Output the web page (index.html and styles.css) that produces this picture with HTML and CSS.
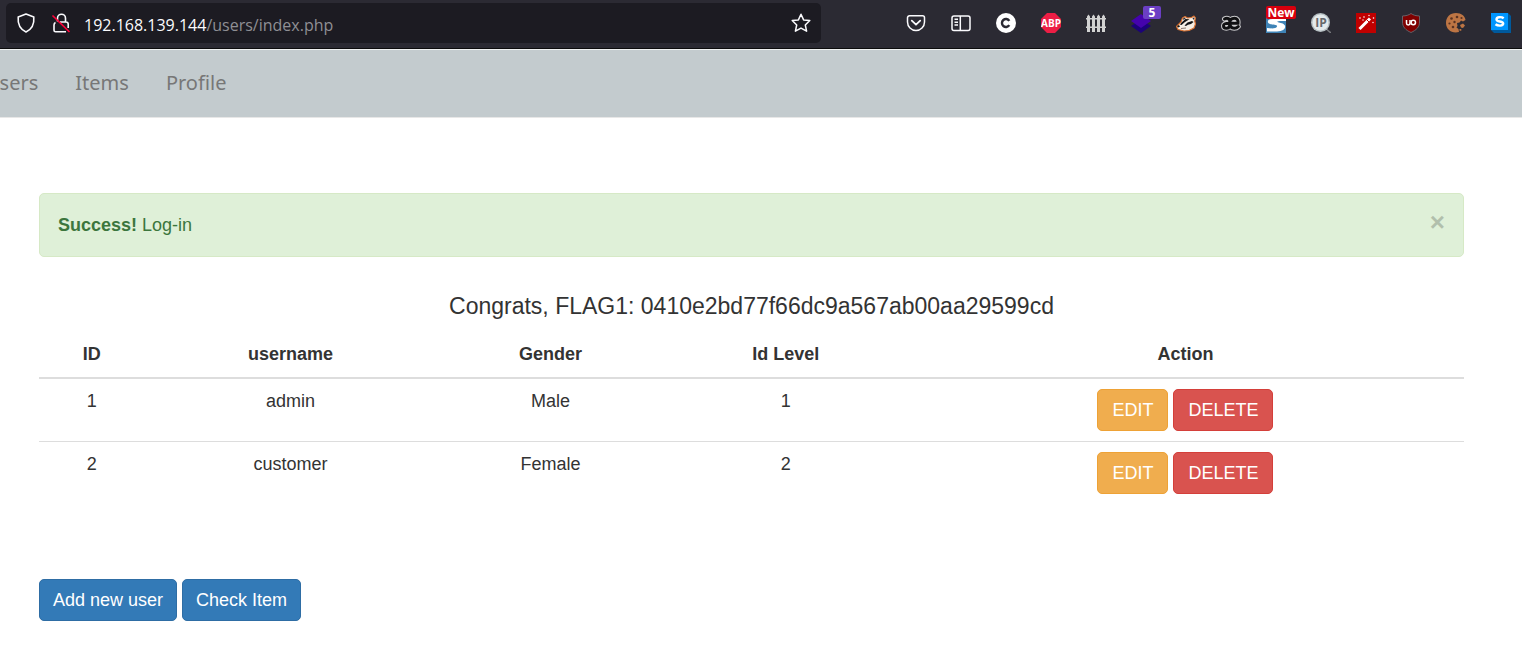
FILE: index.html
```html
<!DOCTYPE html>
<html lang="en">
<head>
<meta charset="utf-8">
<title>Users</title>
<link rel="stylesheet" href="styles.css">
</head>
<body>
<header class="toolbar">
  <div class="urlbar">
    <button class="icon-btn" aria-label="Tracking protection"><svg viewBox="0 0 20 20"><path d="M10 1 L17.800 3.900 C18.300 9.500 16.500 16 10 19 C3.500 16 1.700 9.500 2.200 3.900 Z" fill="none" stroke="#fbfbfe" stroke-width="1.600" stroke-linejoin="round"/></svg></button>
    <button class="icon-btn" aria-label="Connection not secure"><svg viewBox="0 0 20 20" fill="none"><path d="M6.500 8.500V5.200a4 4 0 0 1 8 0V9M4.500 9.500C3.300 10 3 11 3 12v5.200a1.600 1.600 0 0 0 1.600 1.600H15M9 9h6.200a2 2 0 0 1 2 2v4" stroke="#fbfbfe" stroke-width="1.600"/><path d="M1.500 2.500L18.500 19" stroke="#ff0039" stroke-width="1.700"/></svg></button>
    <div class="address" role="textbox" aria-label="Address" contenteditable="true" spellcheck="false"><span class="host">192.168.139.144</span>/users/index.php</div>
    <button class="icon-btn" aria-label="Bookmark this page"><svg viewBox="0 0 20 20"><path d="M10 1.300 L12.600 6.900 L18.800 7.500 L14.300 12 L15.600 18.200 L10 15.100 L4.400 18.200 L5.700 12 L1.200 7.500 L7.400 6.900 Z" fill="none" stroke="#fbfbfe" stroke-width="1.500" stroke-linejoin="round"/></svg></button>
  </div>
  <div class="extensions">
    <button class="icon-btn" aria-label="Pocket"><svg viewBox="0 0 20 20" fill="none" stroke="#fbfbfe" stroke-width="1.500" stroke-linecap="round" stroke-linejoin="round"><path d="M3.500 2.800h13a2 2 0 0 1 2 2V9a8.500 8.500 0 0 1-17 0V4.800a2 2 0 0 1 2-2z"/><path d="M5.800 7.700L10 11.700L14.200 7.700" stroke-width="1.800"/></svg></button>
    <button class="icon-btn" aria-label="Sidebar"><svg viewBox="0 0 20 20" fill="none" stroke="#fbfbfe" stroke-width="1.500"><rect x="1" y="3" width="18" height="14.500" rx="2"/><path d="M9.300 3v14.500M3.500 6.300h3.500M3.500 9.200h3.500M3.500 12h3.500"/></svg></button>
    <button class="icon-btn" aria-label="Extension C"><svg viewBox="0 0 20 20"><circle cx="10" cy="10" r="10" fill="#fff"/><path d="M13.300 7.800a4 4 0 1 0 0 4.400" fill="none" stroke="#2b2a33" stroke-width="2.400"/></svg></button>
    <button class="icon-btn" aria-label="Adblock Plus"><svg viewBox="0 0 20 20"><path d="M6 0h8l6 6v8l-6 6H6l-6-6V6z" fill="#ed1e45"/><text class="abp-label" x="10" y="14" text-anchor="middle">ABP</text></svg></button>
    <button class="icon-btn" aria-label="Fence"><svg viewBox="0 0 20 20" fill="#d2d2d2"><path d="M1 3.500l1.500-2 1.500 2V19H1zM6 3.500l1.500-2 1.500 2V19H6zM11 3.500l1.500-2 1.500 2V19h-3zM16 3.500l1.500-2 1.500 2V19h-3z"/><path d="M0 5h20v1.500H0zM0 13.500h20V15H0z"/></svg></button>
    <button class="icon-btn" aria-label="Layers, 5"><svg viewBox="0 0 20 20"><path d="M0 13L10 6l10 7-10 7z" fill="#1c0279"/><path d="M0 8L10 1l10 7-10 7z" fill="#4503ad"/></svg><span class="badge badge-count">5</span></button>
    <button class="icon-btn" aria-label="Privacy Badger"><svg viewBox="0 0 20 20"><path d="M.5 13.500L5 9 6.500 5 9 3.500l2.500 1.500 4-.5L18 3l1.500 2-.8 3 .8 3-1.500 4-5 2.500-5 .5-6-1.500z" fill="#f6efe4" stroke="#d9702f" stroke-width="1.200" stroke-linejoin="round"/><path d="M5.500 9.500L9.500 6l4 .3L9 9l-3.500 3-1.500-.3z" fill="#141414"/><path d="M8.500 12.500l3-3 4.500-1.500 1.500 1-2.500 2-3 .7-2 1.300z" fill="#141414"/><path d="M1 13l2-1 1 1.800-2 .7z" fill="#141414"/><path d="M7 5.500l1.800-1 1 .8-2.300 1.700zM16.500 5.500L18 4.300l.5 1.500-1 1z" fill="#2b2a33"/><path d="M5 15.500l5-.5" stroke="#8f7c70"/></svg></button>
    <button class="icon-btn" aria-label="Extension AE"><svg viewBox="0 0 20 20" fill="none" stroke-linecap="round"><path stroke="#c9c9cb" stroke-width="5" d="M3.500 6C5.500 4.800 8.800 5 8.800 8v4c0 2-1.500 3.200-3.500 3.200S2.500 14.300 2.500 12.800 4 10.300 8.500 10.300h8.500C17.500 7 16 5.300 13.500 5.300 10.500 5.300 8.800 7 8.800 10c0 4 2 5.200 4.500 5.200 2 0 3-.6 4-1.700"/><path stroke="#101012" stroke-width="3" d="M3.500 6C5.500 4.800 8.800 5 8.800 8v4c0 2-1.500 3.200-3.500 3.200S2.500 14.300 2.500 12.800 4 10.300 8.500 10.300h8.500C17.500 7 16 5.300 13.500 5.300 10.500 5.300 8.800 7 8.800 10c0 4 2 5.200 4.500 5.200 2 0 3-.6 4-1.700"/><path stroke="#c9c9cb" stroke-width="1.400" d="M5 12.800h.8M13 7.800h.8"/></svg></button>
    <button class="icon-btn" aria-label="Extension S, new"><svg viewBox="0 0 20 20"><path d="M0 0h20v20H0z" fill="#3e83b6"/><path d="M20 6H7Q1 6 2 9.500C3 12.500 12 11 11 13.500S5 15.500 1 15v3.500h10c8 0 10-5 6.500-7.500-2-1.500-7-1.500-6-2.500s4-.5 8.500-.5z" fill="#fff"/></svg><span class="badge badge-new">New</span></button>
    <button class="icon-btn" aria-label="IP lookup"><svg viewBox="0 0 20 20"><path d="M14 15l6 5" stroke="#77797d" stroke-width="1.500"/><circle cx="9.500" cy="9.500" r="9.500" fill="#b7c0c4"/><circle cx="9.500" cy="9.500" r="8" fill="#e4eaec"/><text class="ip-label" x="10" y="14" text-anchor="middle">IP</text></svg></button>
    <button class="icon-btn" aria-label="Magic wand"><svg viewBox="0 0 20 20"><path d="M0 0h20v20H0z" fill="#c00000"/><path d="M3.500 16L14 5.500" stroke="#fff" stroke-width="3"/><path d="M10.500 6.500l2.500 2.500" stroke="#c00000"/><g fill="#fff"><circle cx="4" cy="5" r=".8"/><circle cx="8" cy="4" r=".8"/><circle cx="7" cy="7" r=".7"/><circle cx="13" cy="2.500" r=".7"/><circle cx="17.500" cy="5" r=".8"/><circle cx="17" cy="9.500" r=".7"/></g></svg></button>
    <button class="icon-btn" aria-label="uBlock Origin"><svg viewBox="0 0 20 20"><path d="M10 .5c2.500 1.800 5 2.300 8.500 2.500v6c0 5-3 8-8.500 10.500C4.500 17 1.500 14 1.500 9V3C5 2.800 7.500 2.300 10 .5z" fill="#800000" stroke="#656067"/><path d="M5.500 7v3.200c0 2.300 3.500 2.300 3.500 0V7M9 7v4.500" fill="none" stroke="#fff" stroke-width="1.500"/><circle cx="12.300" cy="9.500" r="2.200" fill="none" stroke="#fff" stroke-width="1.500"/></svg></button>
    <button class="icon-btn" aria-label="Cookies"><svg viewBox="0 0 20 20"><path d="M10 0c5.500 0 9 3 9.500 7L17 8.500l-2-1-1.500 2-2.500.5.500 3-1 1.500 2 1.500.5 3C6 21 0 16.500 0 10 0 4 4 0 10 0z" fill="#bd7544"/><g fill="#5a3322"><circle cx="5.500" cy="5.500" r="1.300"/><circle cx="11" cy="4" r="1.300"/><circle cx="8.500" cy="9" r="1.200"/><circle cx="3.500" cy="10.500" r="1.100"/><circle cx="15.500" cy="5" r="1.100"/><circle cx="7" cy="14" r="1.300"/></g><path d="M14 12l3-1.500 2 2-2 2.500-2-.5zM13.500 16h1.800v1.800h-1.800z" fill="#bd7544"/></svg></button>
    <button class="icon-btn" aria-label="Extension S"><svg viewBox="0 0 20 20"><path d="M0 0h17l3 3v17H3l-3-3z" fill="#00599c"/><path d="M0 0h17v17H0z" fill="#0096ff"/><path d="M12.700 5.300C10.500 3.600 5.500 3.700 5.500 6.400c0 2.800 6.700 1.500 6.700 4.200 0 2.500-5.200 2.600-7.700.6" fill="none" stroke="#fff" stroke-width="2.400"/></svg></button>
  </div>
</header>

<nav class="navbar">
  <ul class="nav-list">
    <li><a class="nav-link" href="#">Users</a></li>
    <li><a class="nav-link" href="#">Items</a></li>
    <li><a class="nav-link" href="#">Profile</a></li>
  </ul>
</nav>

<main class="page">
  <div class="alert" role="alert">
    <p class="alert-text"><strong>Success!</strong> Log-in</p>
    <button class="alert-close" aria-label="Close">×</button>
  </div>
  <h4 class="title">Congrats, FLAG1: 0410e2bd77f66dc9a567ab00aa29599cd</h4>
  <table class="users">
    <colgroup><col class="col-id"><col class="col-name"><col class="col-gender"><col class="col-level"><col class="col-action"></colgroup>
    <thead>
      <tr><th>ID</th><th>username</th><th>Gender</th><th>Id Level</th><th>Action</th></tr>
    </thead>
    <tbody>
      <tr><td>1</td><td>admin</td><td>Male</td><td>1</td><td><div class="actions actions-center"><button class="btn btn-warning">EDIT</button><button class="btn btn-danger">DELETE</button></div></td></tr>
      <tr><td>2</td><td>customer</td><td>Female</td><td>2</td><td><div class="actions actions-center"><button class="btn btn-warning">EDIT</button><button class="btn btn-danger">DELETE</button></div></td></tr>
    </tbody>
  </table>
  <div class="actions">
    <a class="btn btn-primary" href="#">Add new user</a>
    <a class="btn btn-primary" href="#">Check Item</a>
  </div>
</main>
</body>
</html>
```

FILE: styles.css
```css
* { box-sizing: border-box; }

body {
  margin: 0;
  background: #fff;
  color: #333;
  font: 18px/25px "Liberation Sans", Arial, sans-serif;
  overflow-x: hidden;
}

button { font: inherit; cursor: pointer; }

/* Browser toolbar */
.toolbar {
  display: flex;
  align-items: center;
  gap: 85px;
  padding: 3px 11px 5px 6px;
  background: #2b2a33;
  border-bottom: 1px solid #0c0c0d;
}

.urlbar {
  flex: 1;
  display: flex;
  align-items: center;
  gap: 15px;
  height: 40px;
  padding: 0 10px;
  background: #1c1b22;
  border-radius: 5px;
}

.address {
  flex: 1;
  color: #8f8f94;
  font: 16px/24px "Open Sans", "Noto Sans", sans-serif;
  margin-top: 4px;
  margin-left: -2px;
  white-space: nowrap;
  outline: none;
}

.host { color: #fbfbfe; }

.icon-btn {
  position: relative;
  flex: none;
  width: 20px;
  height: 20px;
  padding: 0;
  border: 0;
  background: none;
}

.icon-btn svg { display: block; width: 20px; height: 20px; }

.extensions { display: flex; gap: 25px; }

.abp-label { font: bold 10px "Open Sans", sans-serif; fill: #fff; }
.ip-label { font: bold 12px "Open Sans", sans-serif; fill: #67696c; }

.badge {
  position: absolute;
  top: -7px;
  height: 13px;
  border-radius: 2px;
  color: #fff;
  font: bold 12px/13px "Open Sans", sans-serif;
  text-align: center;
}

.badge-count { left: 12px; width: 18px; background: #6b3fc4; }
.badge-new { left: 0; width: 30px; background: #d9000d; }

/* Site navigation */
.navbar {
  background: #c3cbce;
  border-top: 1px solid #f0f2f2;
  border-bottom: 1px solid #e7e7e7;
}

.nav-list {
  display: flex;
  margin: 0 0 0 -34px;
  padding: 0;
  list-style: none;
}

.nav-link {
  display: block;
  padding: 20px 18px 22px 19px;
  color: #777;
  font: 20px/25px "Noto Sans", "Open Sans", sans-serif;
  text-decoration: none;
}

/* Page content */
.page { padding: 75px 58px 35px 39px; }

.alert {
  display: flex;
  align-items: flex-start;
  justify-content: space-between;
  padding: 18px;
  color: #3c763d;
  background: #dff0d8;
  border: 1px solid #d6e9c6;
  border-radius: 5px;
}

.alert-text { margin: 0; line-height: 26px; }

.alert-close {
  padding: 0;
  border: 0;
  background: none;
  color: #000;
  opacity: 0.2;
  font-size: 26px;
  font-weight: bold;
  line-height: 20px;
}

.title {
  margin: 37px 0 13px;
  font-size: 23px;
  font-weight: 400;
  line-height: 25px;
  text-align: center;
}

.users {
  width: 100%;
  margin-bottom: 75px;
  border-collapse: collapse;
  table-layout: fixed;
  text-align: center;
}

.col-id { width: 7.4%; }
.col-name { width: 20.5%; }
.col-gender { width: 16%; }
.col-level { width: 17%; }
.col-action { width: 39.1%; }

.users th, .users td { padding: 10px; vertical-align: top; }
.users thead th { border-bottom: 2px solid #ddd; }
.users tbody tr + tr td { border-top: 1px solid #ddd; }

.actions { display: flex; gap: 5px; }
.actions-center { justify-content: center; }

.btn {
  padding: 8px 14px 7px;
  border: 1px solid;
  border-radius: 5px;
  color: #fff;
  line-height: 25px;
  text-decoration: none;
}

.btn-warning { background: #f0ad4e; border-color: #eea236; }
.btn-danger { background: #d9534f; border-color: #d43f3a; }
.btn-primary { padding-inline: 13px; background: #337ab7; border-color: #2e6da4; }
```
